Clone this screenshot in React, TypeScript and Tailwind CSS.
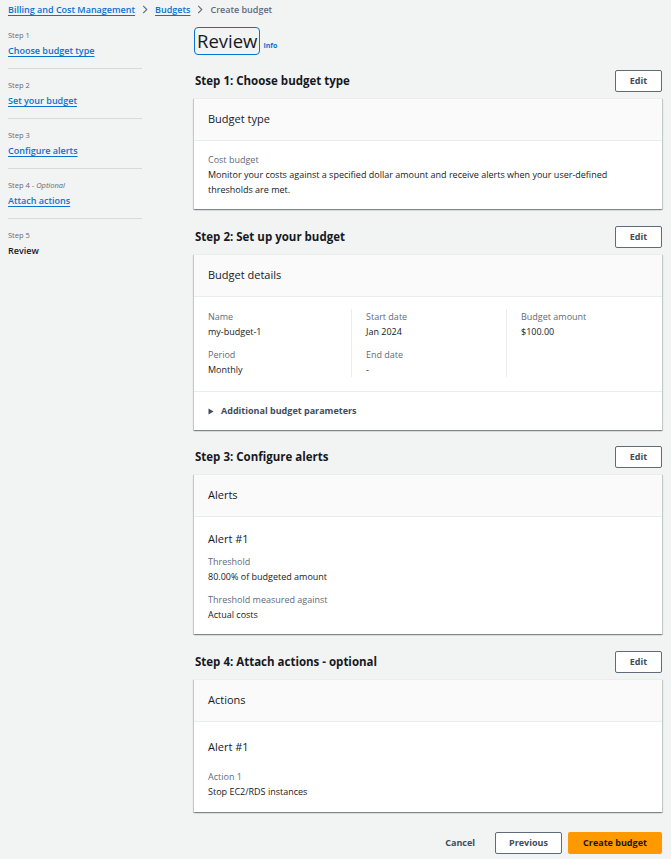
import React from "react";

const FONT = { fontFamily: '"Open Sans", "Noto Sans", sans-serif' };

const navSteps = [
  { step: "Step 1", label: "Choose budget type", link: true },
  { step: "Step 2", label: "Set your budget", link: true },
  { step: "Step 3", label: "Configure alerts", link: true },
  { step: "Step 4", optional: true, label: "Attach actions", link: true },
  { step: "Step 5", label: "Review", link: false },
];

const cardShadow =
  "shadow-[0_1px_1px_0_rgba(0,28,36,0.3),1px_1px_1px_0_rgba(0,28,36,0.15),-1px_1px_1px_0_rgba(0,28,36,0.15)]";

function Chevron() {
  return (
    <svg width="8" height="9" viewBox="0 0 8 10" className="mx-[6px] text-[#5f6b7a]">
      <path d="M2 1l4 4-4 4" fill="none" stroke="currentColor" strokeWidth="1.2" />
    </svg>
  );
}

function EditButton() {
  return (
    <button className="h-[22px] w-[47px] rounded-[2px] border border-[#5f6b7a] bg-white text-[9px] font-bold text-[#414d5c]">
      Edit
    </button>
  );
}

function Section({
  title,
  header,
  children,
  className = "",
}: {
  title: string;
  header: string;
  children: React.ReactNode;
  className?: string;
}) {
  return (
    <section className={className}>
      <div className="flex h-[22px] items-center justify-between">
        <h2 className="pl-px text-[11.5px] font-bold text-[#16191f]">{title}</h2>
        <EditButton />
      </div>
      <div className={`mt-[6px] bg-white ${cardShadow} border-t border-[#eaeded]`}>
        <div className="flex h-[42px] items-center border-b border-[#eaeded] bg-[#fafafa] px-[14px] text-[11px] text-[#16191f]">
          {header}
        </div>
        {children}
      </div>
    </section>
  );
}

function Field({ label, value, className = "" }: { label: string; value: string; className?: string }) {
  return (
    <div className={className}>
      <div className="text-[9px] leading-[15px] text-[#5f6b7a]">{label}</div>
      <div className="text-[9px] leading-[15px] text-[#16191f]">{value}</div>
    </div>
  );
}

export default function App() {
  return (
    <div style={FONT} className="min-h-[859px] w-full bg-[#f2f3f3] text-[#16191f]">
      {/* breadcrumb */}
      <nav className="flex h-[19px] items-center pl-[8px] text-[9px] font-semibold">
        <a className="text-[#0972d3] underline underline-offset-2">Billing and Cost Management</a>
        <Chevron />
        <a className="text-[#0972d3] underline underline-offset-2">Budgets</a>
        <Chevron />
        <span className="text-[#5f6b7a]">Create budget</span>
      </nav>

      <div className="flex">
        {/* wizard steps */}
        <aside className="ml-[8px] w-[134px] shrink-0">
          {navSteps.map((s, i) => (
            <div
              key={s.step}
              className={`flex flex-col pb-[10px] pt-[9px] ${i < navSteps.length - 1 ? "border-b border-[#d5dbdb]" : ""}`}
            >
              <div className="text-[7.5px] leading-[14px] text-[#5f6b7a]">
                {s.step}
                {s.optional && (
                  <>
                    {" - "}
                    <i>Optional</i>
                  </>
                )}
              </div>
              <div
                className={`mt-[2px] text-[9px] font-semibold leading-[14px] ${
                  s.link ? "text-[#0972d3] underline underline-offset-2" : "font-bold text-[#16191f]"
                }`}
              >
                {s.label}
              </div>
            </div>
          ))}
        </aside>

        {/* main */}
        <main className="ml-[52px] mr-[9px] flex-1">
          <div className="mt-[8px] flex items-end">
            <h1 className="flex h-[28px] items-center rounded-[4px] border border-[#0972d3] px-[2px] text-[18.5px] leading-none text-[#16191f]">
              Review
            </h1>
            <a className="mb-[4px] ml-[3px] text-[7px] font-bold text-[#0972d3]">Info</a>
          </div>

          <Section title="Step 1: Choose budget type" header="Budget type" className="mt-[15px]">
            <div className="px-[14px] pb-[12px] pt-[11px] text-[9px] leading-[15px]">
              <div className="text-[#5f6b7a]">Cost budget</div>
              <div className="pr-[40px]">
                Monitor your costs against a specified dollar amount and receive alerts when your user-defined
                thresholds are met.
              </div>
            </div>
          </Section>

          <Section title="Step 2: Set up your budget" header="Budget details" className="mt-[17px]">
            <div className="grid grid-cols-[143px_155px_1fr] px-[14px] pb-[14px] pt-[12px]">
              <div className="flex flex-col gap-[8px] pr-[14px]">
                <Field label="Name" value="my-budget-1" />
                <Field label="Period" value="Monthly" />
              </div>
              <div className="flex flex-col gap-[8px] border-l border-[#eaeded] px-[14px]">
                <Field label="Start date" value="Jan 2024" />
                <Field label="End date" value="-" />
              </div>
              <div className="flex flex-col gap-[8px] border-l border-[#eaeded] pl-[14px]">
                <Field label="Budget amount" value="$100.00" />
              </div>
            </div>
            <div className="flex h-[39px] items-center border-t border-[#eaeded] px-[14px] text-[9px] font-bold text-[#414d5c]">
              <svg width="6" height="7" viewBox="0 0 6 7" className="mr-[7px]">
                <path d="M0.5 0.5L5.5 3.5L0.5 6.5Z" fill="#414d5c" />
              </svg>
              Additional budget parameters
            </div>
          </Section>

          <Section title="Step 3: Configure alerts" header="Alerts" className="mt-[16px]">
            <div className="px-[14px] pb-[12px] pt-[13px]">
              <div className="text-[11px] leading-[18px]">Alert #1</div>
              <Field label="Threshold" value="80.00% of budgeted amount" className="mt-[6px]" />
              <Field label="Threshold measured against" value="Actual costs" className="mt-[8px]" />
            </div>
          </Section>

          <Section title="Step 4: Attach actions - optional" header="Actions" className="mt-[17px]">
            <div className="px-[14px] pb-[13px] pt-[16px]">
              <div className="text-[11px] leading-[18px]">Alert #1</div>
              <Field label="Action 1" value="Stop EC2/RDS instances" className="mt-[13px]" />
            </div>
          </Section>

          <div className="mt-[20px] flex items-center justify-end pb-[5px]">
            <button className="mr-[20px] text-[9px] font-bold text-[#414d5c]">Cancel</button>
            <button className="h-[22px] w-[67px] rounded-[2px] border border-[#5f6b7a] bg-white text-[9px] font-bold text-[#414d5c]">
              Previous
            </button>
            <button className="ml-[6px] h-[22px] w-[94px] rounded-[2px] bg-[#ff9900] text-[9px] font-bold text-[#16191f]">
              Create budget
            </button>
          </div>
        </main>
      </div>
    </div>
  );
}
